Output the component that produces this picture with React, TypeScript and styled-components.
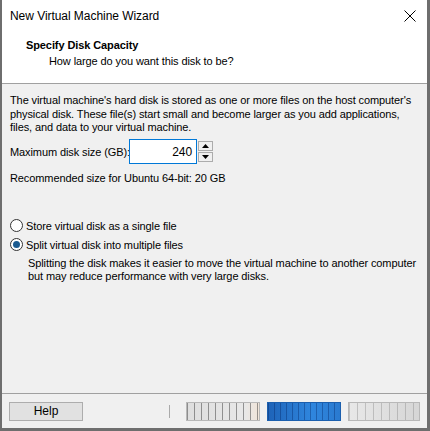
import React from "react";
import styled, { createGlobalStyle } from "styled-components";

const Global = createGlobalStyle`
  html, body { margin: 0; padding: 0; background: #f0f0f0; }
  body { font-family: "Liberation Sans", Arial, sans-serif; }
  * { box-sizing: border-box; }
`;

const Window = styled.div`
  width: 430px;
  height: 431px;
  display: flex;
  flex-direction: column;
  background: #f0f0f0;
  border-left: 2px solid #6e6e6e;
  border-right: 3px solid #6e6e6e;
  border-bottom: 3px solid #6e6e6e;
  font-family: "Liberation Sans", Arial, sans-serif;
  font-size: 11px;
  letter-spacing: -0.1px;
  color: #000;
`;

const TitleBar = styled.div`
  height: 31px;
  display: flex;
  align-items: center;
  justify-content: space-between;
  background: #fff;
  padding: 0 10px 0 8px;
  font-size: 12px;
  letter-spacing: -0.05px;
`;

const CloseBtn = styled.div`
  width: 14px;
  height: 14px;
  display: flex;
  align-items: center;
  justify-content: center;
`;

const Header = styled.div`
  height: 53px;
  background: #fff;
  border-bottom: 1px solid #a0a0a0;
  display: flex;
  flex-direction: column;
  padding: 6px 0 0 24px;
`;

const HeaderTitle = styled.div`
  font-weight: bold;
  font-size: 11px;
  line-height: 16px;
`;

const HeaderSub = styled.div`
  padding-left: 23px;
  line-height: 16px;
`;

const Body = styled.div`
  flex: 1;
  display: flex;
  flex-direction: column;
  padding: 10px 8px 0 8px;
`;

const Para = styled.div`
  line-height: 13.5px;
  white-space: nowrap;
`;

const SizeRow = styled.div`
  display: flex;
  align-items: center;
  margin-top: 4px;
  height: 26px;
`;

const Label = styled.span`
  flex: none;
  width: 119px;
  white-space: nowrap;
`;

const Input = styled.div`
  flex: none;
  width: 68px;
  height: 25px;
  border: 1px solid #0078d7;
  background: #fff;
  display: flex;
  align-items: center;
  justify-content: flex-end;
  padding-right: 4px;
  font-size: 12px;
`;

const Spinner = styled.div`
  flex: none;
  display: flex;
  flex-direction: column;
  margin-left: 1px;
  width: 15px;
  height: 21px;
  gap: 1px;
`;

const SpinBtn = styled.div`
  flex: 1;
  background: #f0f0f0;
  border: 1px solid #acacac;
  display: flex;
  align-items: center;
  justify-content: center;
`;

const Recommended = styled.div`
  margin-top: 6px;
  line-height: 14px;
`;

const Options = styled.div`
  margin-top: 34px;
  display: flex;
  flex-direction: column;
  gap: 5px;
`;

const RadioRow = styled.label`
  display: flex;
  align-items: center;
  gap: 3px;
  height: 14px;
`;

const RadioCircle = styled.span<{ $checked?: boolean }>`
  width: 13px;
  height: 13px;
  border-radius: 50%;
  border: 1px solid #333;
  background: #fff;
  display: flex;
  align-items: center;
  justify-content: center;
  &::after {
    content: "";
    width: 7px;
    height: 7px;
    border-radius: 50%;
    background: ${(p) => (p.$checked ? "#1a5a8f" : "transparent")};
  }
`;

const Description = styled.div`
  padding-left: 18px;
  margin-top: 5px;
  line-height: 13.5px;
  white-space: nowrap;
`;

const Footer = styled.div`
  height: 35px;
  border-top: 1px solid #a0a0a0;
  display: flex;
  align-items: center;
  padding: 0 8px 0 7px;
`;

const Button = styled.div<{ $variant?: "plain" | "glitch" | "blue" | "light" }>`
  flex: none;
  width: ${(p) => (p.$variant === "light" ? "72px" : "74px")};
  height: 19px;
  display: flex;
  align-items: center;
  justify-content: center;
  font-size: 12px;
  letter-spacing: 0;
  border: 1px solid
    ${(p) =>
      p.$variant === "blue" ? "#1b5fae" : p.$variant === "plain" ? "#adadad" : "#b8b8b8"};
  background: ${(p) =>
    p.$variant === "blue"
      ? "repeating-linear-gradient(90deg, rgba(0,30,90,0.35) 0 1px, transparent 1px 6px), linear-gradient(90deg, #1e63b8, #2f86de 60%, #2a7ad0)"
      : p.$variant === "glitch"
      ? "repeating-linear-gradient(90deg, rgba(60,60,60,0.5) 0 1px, transparent 1px 7px), linear-gradient(90deg, #dedede, #e8e8e8 80%, #f0e4d8)"
      : p.$variant === "light"
      ? "repeating-linear-gradient(90deg, rgba(120,120,120,0.35) 0 1px, transparent 1px 8px), linear-gradient(90deg, #e8e8e8, #d6d6d6)"
      : "#e1e1e1"};
  color: ${(p) => (p.$variant === "plain" ? "#000" : "transparent")};
`;

const Divider = styled.div`
  flex: none;
  width: 1px;
  height: 13px;
  background: #aaa;
  margin-left: 86px;
  margin-right: 16px;
`;

const Spacer = styled.div`
  flex: none;
  width: 7px;
`;

export default function App() {
  return (
    <>
      <Global />
      <Window>
        <TitleBar>
          <span>New Virtual Machine Wizard</span>
          <CloseBtn>
            <svg width="12" height="12" viewBox="0 0 12 12">
              <path d="M0.5 0.5 L11.5 11.5 M11.5 0.5 L0.5 11.5" stroke="#000" strokeWidth="1" fill="none" />
            </svg>
          </CloseBtn>
        </TitleBar>
        <Header>
          <HeaderTitle>Specify Disk Capacity</HeaderTitle>
          <HeaderSub>How large do you want this disk to be?</HeaderSub>
        </Header>
        <Body>
          <Para>
            The virtual machine's hard disk is stored as one or more files on the host computer's
            <br />
            physical disk. These file(s) start small and become larger as you add applications,
            <br />
            files, and data to your virtual machine.
          </Para>
          <SizeRow>
            <Label>Maximum disk size (GB):</Label>
            <Input>240</Input>
            <Spinner>
              <SpinBtn>
                <svg width="7" height="4" viewBox="0 0 7 4"><path d="M3.5 0 L7 4 L0 4 Z" fill="#000" /></svg>
              </SpinBtn>
              <SpinBtn>
                <svg width="7" height="4" viewBox="0 0 7 4"><path d="M0 0 L7 0 L3.5 4 Z" fill="#000" /></svg>
              </SpinBtn>
            </Spinner>
          </SizeRow>
          <Recommended>Recommended size for Ubuntu 64-bit: 20 GB</Recommended>
          <Options>
            <RadioRow>
              <RadioCircle />
              Store virtual disk as a single file
            </RadioRow>
            <RadioRow>
              <RadioCircle $checked />
              Split virtual disk into multiple files
            </RadioRow>
          </Options>
          <Description>
            Splitting the disk makes it easier to move the virtual machine to another computer
            <br />
            but may reduce performance with very large disks.
          </Description>
        </Body>
        <Footer>
          <Button $variant="plain">Help</Button>
          <Divider />
          <Button $variant="glitch">&lt; Back</Button>
          <Spacer />
          <Button $variant="blue">Next &gt;</Button>
          <Spacer />
          <Button $variant="light">Cancel</Button>
        </Footer>
      </Window>
    </>
  );
}
